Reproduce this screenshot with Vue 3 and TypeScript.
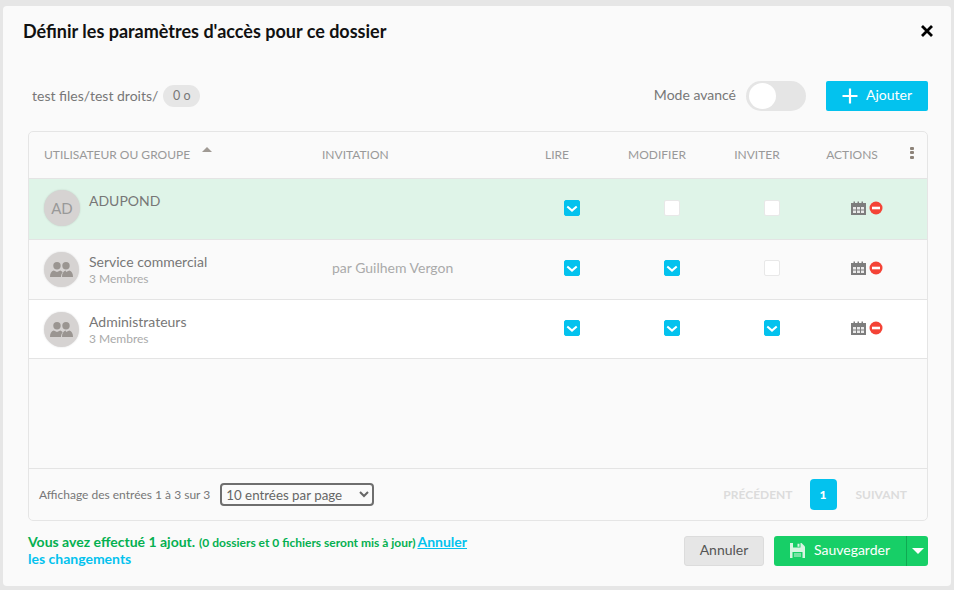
<script setup lang="ts">
interface Row {
  id: number
  name: string
  sub?: string
  initials?: string
  invite?: string
  perms: boolean[]
  kind: string
}

const rows: Row[] = [
  { id: 1, name: 'ADUPOND', initials: 'AD', perms: [true, false, false], kind: 'added' },
  { id: 2, name: 'Service commercial', sub: '3 Membres', invite: 'par Guilhem Vergon', perms: [true, true, false], kind: 'plain' },
  { id: 3, name: 'Administrateurs', sub: '3 Membres', perms: [true, true, true], kind: 'last' },
]
</script>

<template>
  <div class="modal">
    <header class="head">
      <h1>Définir les paramètres d'accès pour ce dossier</h1>
      <svg class="close" width="14" height="14" viewBox="0 0 14 14"><path d="M2 2l10 10M12 2L2 12" stroke="#000" stroke-width="2.800" fill="none" /></svg>
    </header>

    <div class="bar">
      <div class="path">
        <span class="path-text">test files/test droits/</span>
        <span class="size">0 o</span>
      </div>
      <div class="tools">
        <span class="mode">Mode avancé</span>
        <span class="switch"><span class="knob"></span></span>
        <button class="add">
          <svg width="16" height="16" viewBox="0 0 16 16"><path d="M8 .5v15M.5 8h15" stroke="#fff" stroke-width="2.200" fill="none" /></svg>
          <span class="lbl">Ajouter</span>
        </button>
      </div>
    </div>

    <section class="table">
      <div class="grid thead">
        <div class="th first">UTILISATEUR OU GROUPE<i class="sort"></i></div>
        <div class="th first">INVITATION</div>
        <div class="th center">LIRE</div>
        <div class="th center">MODIFIER</div>
        <div class="th center">INVITER</div>
        <div class="th center">ACTIONS</div>
        <div class="th dots"><i></i><i></i><i></i></div>
      </div>

      <div v-for="r in rows" :key="r.id" class="grid row" :class="r.kind">
        <div class="who">
          <span class="avatar" :class="{ group: !r.initials }">
            <template v-if="r.initials">{{ r.initials }}</template>
            <svg v-else width="23" height="15" viewBox="0 0 23 15" fill="#9a9591">
              <circle cx="7" cy="3.800" r="3.700" />
              <path d="M0 15c0-3.500 1.200-5.700 3.800-6.500L7 10l3.200-1.500c1.100.3 1.900.9 2.500 1.700-1 1.200-1.700 2.800-1.700 4.800z" />
              <circle cx="16" cy="3.800" r="3.700" />
              <path d="M12 15c0-3.500 1.200-5.700 3.800-6.500L16 10l3.200-1.500c2.600.8 3.800 3 3.800 6.500z" />
            </svg>
          </span>
          <div class="names" :class="{ solo: !r.sub }">
            <div class="name">{{ r.name }}</div>
            <div v-if="r.sub" class="sub">{{ r.sub }}</div>
          </div>
        </div>
        <div class="invite">{{ r.invite }}</div>
        <div v-for="(p, i) in r.perms" :key="i" class="cell">
          <span class="check" :class="{ on: p }">
            <svg v-if="p" width="12" height="9" viewBox="0 0 12 9"><path d="M1.300 2.500L6 6.500l4.700-4" stroke="#fff" stroke-width="2.100" fill="none" /></svg>
          </span>
        </div>
        <div class="cell acts">
          <svg width="15" height="14" viewBox="0 0 15 14">
            <path fill="#7d7d7d" d="M0 2h2.500V.5h1.500V2h2.500V.5H8V2h2.500V.5H12V2h3v12H0z" />
            <path fill="#e9e9e9" d="M2 6h3v2.500H2zM6 6h3v2.500H6zM10 6h3v2.500h-3zM2 9.500h3V12H2zM6 9.500h3V12H6zM10 9.500h3V12h-3z" />
          </svg>
          <svg width="14" height="14" viewBox="0 0 14 14"><circle cx="7" cy="7" r="6.500" fill="#f44336" /><rect x="3" y="5.700" width="8" height="2.600" fill="#fff" /></svg>
        </div>
      </div>

      <div class="empty"></div>

      <footer class="tfoot">
        <div class="info">
          <span>Affichage des entrées 1 à 3 sur 3</span>
          <select class="per" aria-label="Entrées par page">
            <option>10 entrées par page</option>
          </select>
        </div>
        <nav class="pager">
          <span>PRÉCÉDENT</span>
          <b class="page">1</b>
          <span>SUIVANT</span>
        </nav>
      </footer>
    </section>

    <div class="actions">
      <p class="msg">
        <strong>Vous avez effectué 1 ajout.</strong>
        <small> (0 dossiers et 0 fichiers seront mis à jour) </small>
        <a class="undo">Annuler</a><br /><a class="plain">les changements</a>
      </p>
      <div class="btns">
        <button class="cancel">Annuler</button>
        <div class="save">
          <button class="save-main">
            <svg width="15" height="15" viewBox="0 0 15 15">
              <path fill="#d7f5e2" d="M0 0h11.500L15 3.500V15H0z" />
              <path fill="#17cf67" d="M3 0h7.500v4.500H3zM2.500 9h10v6h-10z" />
              <path fill="#d7f5e2" d="M7.500 .8h2v3h-2zM4 10.500h7v1H4zM4 12.500h7v1H4z" />
            </svg>
            <span class="lbl">Sauvegarder</span>
          </button>
          <button class="save-more" aria-label="Plus"><i></i></button>
        </div>
      </div>
    </div>
  </div>
</template>

<style>
html, body { margin: 0; background: #e6e6e6; }
</style>

<style scoped>
* { box-sizing: border-box; }
.modal {
  width: 948px;
  height: 580px;
  margin: 6px 0 0 3px;
  padding: 0 23px 0 25px;
  background: #fafafa;
  border-radius: 4px;
  font-family: Lato, sans-serif;
  color: #777;
  font-size: 14px;
  display: flex;
  flex-direction: column;
  overflow: hidden;
}
.head {
  display: flex;
  justify-content: space-between;
  align-items: center;
  height: 49px;
  margin-left: -5px;
}
h1 {
  margin: 0;
  font-size: 18px;
  line-height: 48px;
  font-weight: 700;
  color: #111;
}
.close { margin-right: -6px; }
.bar {
  margin-top: 26px;
  height: 50px;
  display: flex;
  justify-content: space-between;
  align-items: flex-start;
  padding-left: 4px;
}
.path { display: flex; align-items: center; gap: 5px; height: 30px; font-size: 14px; }
.path-text { padding-bottom: 2px; }
.size {
  width: 37px;
  height: 22px;
  border-radius: 11px;
  background: #e6e6e6;
  font-size: 12.500px;
  text-align: center;
  line-height: 22px;
}
.tools { display: flex; align-items: center; height: 30px; }
.mode { font-size: 14px; padding-bottom: 3px; }
.switch {
  width: 60px;
  height: 30px;
  margin-left: 10px;
  border-radius: 15px;
  background: #e5e5e5;
  padding: 2px 3px;
}
.knob { display: block; width: 27px; height: 26px; border-radius: 50%; background: #fff; }
.add {
  margin-left: 20px;
  width: 102px;
  height: 30px;
  border: 0;
  border-radius: 2px;
  background: #03c2ee;
  color: #fff;
  font: 14px Lato, sans-serif;
  display: flex;
  align-items: center;
  justify-content: center;
  gap: 8px;
}
.lbl { margin-bottom: 4px; }
.table {
  height: 390px;
  flex: none;
  border: 1px solid #e5e5e5;
  border-radius: 5px;
  display: flex;
  flex-direction: column;
}
.grid {
  display: grid;
  grid-template-columns: 278px 215px 100px 100px 100px 83px 22px;
  border-bottom: 1px solid #e4e4e4;
}
.thead { height: 47px; align-items: center; font-size: 12px; line-height: 20px; color: #999; }
.th.first { padding-left: 15px; }
.th.center { text-align: center; padding-right: 30px; }
.th.center:nth-child(6) { padding-right: 23px; }
.sort {
  display: inline-block;
  width: 0;
  height: 0;
  margin-left: 12px;
  vertical-align: 7px;
  border: 5px solid transparent;
  border-top: 0;
  border-bottom: 5px solid #a09a94;
}
.dots { display: flex; flex-direction: column; gap: 1.500px; padding-left: 5px; margin-top: -5px; }
.dots i { width: 4px; height: 3px; background: #8d8379; border-radius: 1px; }
.row { align-items: center; background: #fafafa; }
.row.added { height: 61px; padding-bottom: 2px; background: #dff4e8; }
.row.plain { height: 60px; padding-bottom: 3px; }
.row.last { height: 59px; padding-bottom: 2px; background: #fff; }
.who { display: flex; align-items: flex-start; align-self: start; padding: 12px 0 0 15px; }
.avatar {
  flex: none;
  width: 36px;
  height: 36px;
  margin-top: -1px;
  border-radius: 50%;
  background: #d6d3d2;
  box-shadow: 0 0 2px rgba(0, 0, 0, 0.15);
  color: #999;
  font-size: 15px;
  display: flex;
  align-items: center;
  justify-content: center;
}
.avatar.group { width: 35px; height: 35px; margin: 0 1px 0 0; }
.names { margin-left: 9px; }
.names.solo { margin-top: -1px; padding-top: 1px; }
.name { font-size: 14px; line-height: 20px; color: #777; }
.sub { font-size: 12px; line-height: 14px; color: #aaa; }
.invite { padding: 0 0 2px 25px; font-size: 14px; color: #aaa; }
.cell { display: flex; justify-content: center; align-items: center; }
.check {
  width: 16px;
  height: 16px;
  border-radius: 2px;
  background: #fff;
  border: 1px solid #e8e8e8;
  display: flex;
  align-items: center;
  justify-content: center;
}
.check.on { background: #03c2ee; border-color: #03c2ee; }
.acts { grid-column: span 2; gap: 3px; justify-content: flex-start; padding-left: 29px; }
.empty { flex: 1; }
.tfoot {
  height: 52px;
  border-top: 1px solid #e4e4e4;
  display: flex;
  justify-content: space-between;
  align-items: center;
  padding: 0 20px 0 10px;
}
.info { display: flex; align-items: center; gap: 10px; font-size: 12px; color: #777; }
.per {
  width: 154px;
  height: 23px;
  border: 2px solid #6e6e6e;
  border-radius: 4px;
  background: #fafafa;
  color: #666;
  font: 13.333px Lato, sans-serif;
  padding-left: 0;
}
.pager { display: flex; align-items: center; gap: 18px; font-size: 12px; font-weight: 700; color: #dcdcdc; }
.page {
  width: 27px;
  height: 31px;
  margin: 0 1px 0 -1px;
  border-radius: 4px;
  background: #03c2ee;
  color: #fff;
  text-align: center;
  line-height: 31px;
}
.actions {
  display: flex;
  justify-content: space-between;
  align-items: flex-start;
  padding-top: 15px;
}
.msg {
  margin: -3px 0 0;
  width: 450px;
  font-size: 14px;
  line-height: 17px;
  color: #04b050;
}
.msg strong { font-size: 14px; font-weight: 700; }
.msg small { font-size: 12px; font-weight: 700; line-height: 1; margin-left: 1px; }
.msg a { color: #03c2ee; font-weight: 700; text-decoration: underline; }
.msg a.undo { margin-left: -1px; }
.msg a.plain { text-decoration: none; }
.btns { display: flex; gap: 10px; }
.cancel {
  width: 80px;
  height: 30px;
  border: 1px solid #dcdcdc;
  border-radius: 3px;
  background: #e6e6e6;
  color: #555;
  font: 14px Lato, sans-serif;
  padding: 0 0 4px;
}
.save { display: flex; }
.save-main {
  width: 133px;
  height: 30px;
  border: 0;
  border-right: 1px solid #10a952;
  border-radius: 3px 0 0 3px;
  background: #17cf67;
  color: #fff;
  font: 14px Lato, sans-serif;
  display: flex;
  align-items: center;
  justify-content: center;
  gap: 9px;
  padding: 0;
}
.save-main svg { margin-bottom: 2px; }
.save-more {
  width: 21px;
  height: 30px;
  border: 0;
  border-radius: 0 3px 3px 0;
  background: #17cf67;
  display: flex;
  align-items: center;
  justify-content: center;
  padding: 0;
}
.save-more i { width: 0; height: 0; border: 6px solid transparent; border-bottom: 0; border-top: 6px solid #fff; }
</style>
